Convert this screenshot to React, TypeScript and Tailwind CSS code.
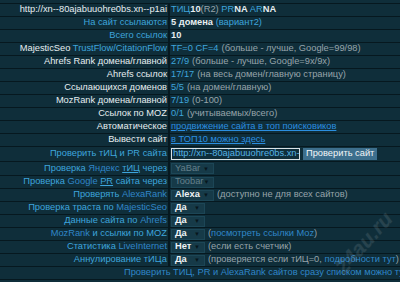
import React from "react";

const Row = ({
	label,
	children,
	h = "h-[13px]",
}: {
	label: React.ReactNode;
	children?: React.ReactNode;
	h?: string;
}) => (
	<div className={`flex ${h} border-b border-[#06181f]`}>
		<div className="flex w-[168px] shrink-0 items-center justify-end whitespace-nowrap pr-[1px]">
			{label}
		</div>
		<div className="flex flex-1 items-center gap-[3px] whitespace-nowrap border-l-2 border-[#06181f] pl-[1px]">
			{children}
		</div>
	</div>
);

const Sel = ({ text, wide, dim }: { text: string; wide?: boolean; dim?: boolean }) => (
	<div
		className={`flex h-[11px] items-center justify-between border border-[#1c4656] bg-[#163a48] pl-[3px] pr-[4px] ${
			wide ? "w-[43px]" : "w-[34px]"
		}`}
	>
		<span className={dim ? "text-[#64808b]" : "font-bold text-[#eef3f5]"}>{text}</span>
		<span className="text-[6px] text-[#07161c]">▼</span>
	</div>
);

const B = "text-[#3ea5dc]";
const D = "text-[#2f86c8]";
const W = "text-[#e6edf0]";
const G = "text-[#97a4aa]";

export default function App() {
	return (
		<div
			className="relative h-[282px] w-[400px] overflow-hidden bg-[#0f2e3a] text-[9.3px] leading-none"
			style={{ fontFamily: '"Liberation Sans", Arial, sans-serif' }}
		>
			<div className="h-[4px] border-b border-[#06181f]" />
			<Row label={<span className={W}>http://xn--80ajabuuohre0bs.xn--p1ai</span>}>
				<span>
					<span className={B}>ТИЦ</span>
					<b className={W}>10</b>
					<span className={G}>(R2) </span>
					<span className={B}>PR</span>
					<b className={W}>NA </b>
					<span className={B}>AR</span>
					<b className={W}>NA</b>
				</span>
			</Row>
			<Row label={<span className={B}>На сайт ссылаются</span>}>
				<span>
					<b className={W}>5 домена</b>
					<span className={B}> (вариант2)</span>
				</span>
			</Row>
			<Row label={<span className={B}>Всего ссылок</span>}>
				<b className={W}>10</b>
			</Row>
			<Row
				label={
					<span>
						<span className={W}>MajesticSeo </span>
						<span className={B}>TrustFlow/CitationFlow</span>
					</span>
				}
			>
				<span className={B}>TF=0 CF=4</span>
				<span className={G}>(больше - лучше, Google=99/98)</span>
			</Row>
			<Row label={<span className={W}>Ahrefs Rank домена/главной</span>}>
				<span className={B}>27/9</span>
				<span className={G}>(больше - лучше, Google=9x/9x)</span>
			</Row>
			<Row label={<span className={W}>Ahrefs ссылок</span>}>
				<span className={B}>17/17</span>
				<span className={G}>(на весь домен/главную страницу)</span>
			</Row>
			<Row label={<span className={W}>Ссылающихся доменов</span>}>
				<span className={B}>5/5</span>
				<span className={G}>(на домен/главную)</span>
			</Row>
			<Row label={<span className={W}>MozRank домена/главной</span>}>
				<span className={B}>7/19</span>
				<span className={G}>(0-100)</span>
			</Row>
			<Row label={<span className={W}>Ссылок по MOZ</span>}>
				<span className={B}>0/1</span>
				<span className={G}>(учитываемых/всего)</span>
			</Row>
			<Row label={<span className={W}>Автоматическое</span>}>
				<a className="text-[#2b8fe0] underline">продвижение сайта в топ поисковиков</a>
			</Row>
			<Row label={<span className={W}>Вывести сайт</span>}>
				<a className="text-[#2b8fe0] underline">в ТОП10 можно здесь</a>
			</Row>
			<Row h="h-[15px]" label={<span className={B}>Проверить тИЦ и PR сайта</span>}>
				<div className="flex h-[12px] w-[129px] items-center overflow-hidden border border-[#d8e2e6] pl-[1px] text-[#56b4e6]">
					<span className="whitespace-nowrap">http://xn--80ajabuuohre0bs.xn--</span>
				</div>
				<div className="flex h-[12px] items-center bg-[#3d6f8d] px-[3px] text-[#f2f6f8]">
					Проверить сайт
				</div>
			</Row>
			<Row
				h="h-[14px]"
				label={
					<span className={B}>
						Проверка <span className={D}>Яндекс</span> <span className="underline">тИЦ</span> через
					</span>
				}
			>
				<Sel text="YaBar" wide dim />
			</Row>
			<Row
				label={
					<span className={B}>
						Проверка <span className={D}>Google</span> <span className="underline">PR</span> сайта через
					</span>
				}
			>
				<Sel text="Toobar" wide dim />
			</Row>
			<Row
				label={
					<span className={B}>
						Проверять <span className={D}>AlexaRank</span>
					</span>
				}
			>
				<Sel text="Alexa" wide />
				<span className={G}>(доступно не для всех сайтов)</span>
			</Row>
			<Row
				label={
					<span className={B}>
						Проверка траста по <span className={D}>MajesticSeo</span>
					</span>
				}
			>
				<Sel text="Да" />
			</Row>
			<Row
				label={
					<span className={B}>
						Данные сайта по <span className={D}>Ahrefs</span>
					</span>
				}
			>
				<Sel text="Да" />
			</Row>
			<Row
				label={
					<span className={B}>
						<span className={D}>MozRank</span> и ссылки по MOZ
					</span>
				}
			>
				<Sel text="Да" />
				<span>
					<span className={G}>(</span>
					<span className={D}>посмотреть ссылки Moz</span>
					<span className={G}>)</span>
				</span>
			</Row>
			<Row
				label={
					<span className={B}>
						Статистика <span className={D}>LiveInternet</span>
					</span>
				}
			>
				<Sel text="Нет" />
				<span className={G}>(если есть счетчик)</span>
			</Row>
			<Row label={<span className={B}>Аннулирование тИЦа</span>}>
				<Sel text="Да" />
				<span>
					<span className={G}>(проверяется если тИЦ=0, </span>
					<span className={D}>подробности тут</span>
					<span className={G}>)</span>
				</span>
			</Row>
			<div className="flex h-[13px] items-center border-b border-[#06181f] pl-[124px] whitespace-nowrap">
				<span className={D}>Проверить ТИЦ, PR и AlexaRank сайтов сразу списком можно тут</span>
			</div>

			{/* watermark */}
			<div className="pointer-events-none absolute left-[326px] top-[232px] -rotate-[48deg] text-[21px] font-bold italic text-white/10">
				24au.ru
			</div>
		</div>
	);
}
